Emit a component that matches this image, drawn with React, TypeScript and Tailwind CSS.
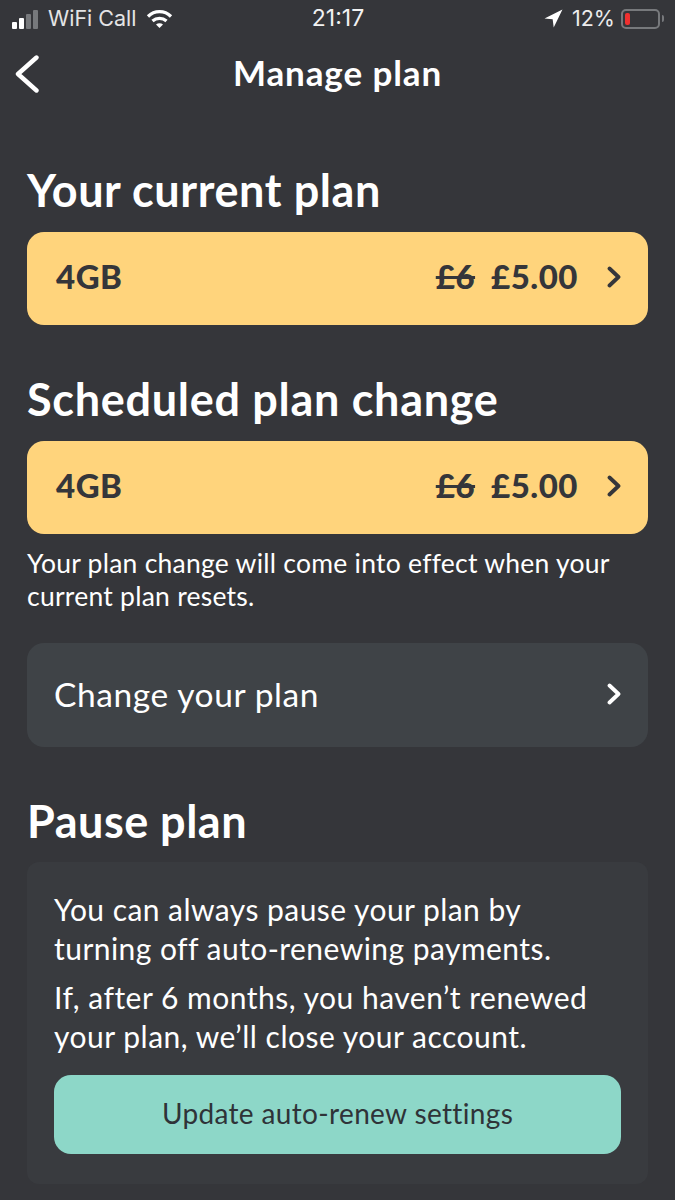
import React from 'react';

const font = { fontFamily: 'Lato, "Noto Sans", sans-serif' };

const Chevron = ({ className }: { className: string }) => (
  <svg viewBox="0 0 14 22" className={className} fill="none" stroke="currentColor" strokeWidth="3.8" strokeLinecap="round" strokeLinejoin="round">
    <path d="M2.5 2.5 L11.5 11 L2.5 19.5" />
  </svg>
);

const StatusBar = () => (
  <div className="h-[37px] flex items-center justify-between pl-[12px] pr-[11px] text-[#f2f2f2] font-['Inter',sans-serif]">
    <div className="w-[200px] flex items-center">
      <div className="flex items-end gap-[2px] h-[20px]">
        <span className="w-[5px] h-[7px] bg-white rounded-[1px]" />
        <span className="w-[5px] h-[11px] bg-white rounded-[1px]" />
        <span className="w-[5px] h-[15px] bg-[#77797c] rounded-[1px]" />
        <span className="w-[5px] h-[19px] bg-[#77797c] rounded-[1px]" />
      </div>
      <span className="ml-[10px] text-[21.5px] text-[#e4e4e5] leading-none">WiFi Call</span>
      <svg viewBox="0 0 26 20" className="ml-[9px] w-[27px] h-[20px]" fill="none" stroke="#fff" strokeWidth="3.2">
        <path d="M1.5 7.5 C8 1 18 1 24.5 7.5" />
        <path d="M6 12 C10 8.4 16 8.4 20 12" />
        <path d="M13 19 L9.5 15.6 C11.5 13.8 14.5 13.8 16.5 15.6 Z" fill="#fff" stroke="none" />
      </svg>
    </div>
    <span className="text-[23px] leading-none">21:17</span>
    <div className="w-[200px] flex items-center justify-end">
      <svg viewBox="0 0 18 18" className="w-[19px] h-[19px]" fill="#fff">
        <path d="M17.5 0.5 L0.5 9 L8.2 9.8 L9.2 17.5 Z" />
      </svg>
      <span className="ml-[9px] text-[21.5px] leading-none text-[#ececec]">12%</span>
      <div className="ml-[6px] w-[39px] h-[20px] rounded-[5px] border-2 border-[#77797c] p-[2px]">
        <div className="w-[5px] h-full rounded-[2px] bg-[#f0302f]" />
      </div>
      <span className="ml-[2px] w-[2px] h-[7px] bg-[#77797c] rounded-r-sm" />
    </div>
  </div>
);

const PlanCard = () => (
  <div className="h-[93px] rounded-[17px] bg-[#ffd47c] text-[#35363a] flex items-center pl-[29px] pr-[27px] pb-[4px] font-black text-[33px] tracking-[0.5px]">
    <span>4GB</span>
    <span className="ml-auto line-through">£6</span>
    <span className="ml-[16px]">£5.00</span>
    <Chevron className="ml-[29px] w-[14px] h-[22px]" />
  </div>
);

export default function App() {
  return (
    <div style={font} className="w-[675px] h-[1200px] overflow-hidden bg-[#35363a] text-white">
      <StatusBar />

      <header className="relative h-[75px] pb-[4px] flex items-center justify-center">
        <button className="absolute left-[15px] top-[18px]">
          <svg viewBox="0 0 24 38" className="w-[24px] h-[38px]" fill="none" stroke="#fff" strokeWidth="4.4" strokeLinecap="round" strokeLinejoin="round">
            <path d="M21.5 2.5 L3 19 L21.5 35.5" />
          </svg>
        </button>
        <h1 className="text-[35px] font-bold leading-none tracking-[0.9px]">Manage plan</h1>
      </header>

      <main className="px-[27px]">
        <h2 className="mt-[51px] mb-[15px] text-[45px] font-bold leading-[54px] tracking-[0.6px]">Your current plan</h2>
        <PlanCard />

        <h2 className="mt-[47px] mb-[15px] text-[45px] font-bold leading-[54px] tracking-[0.7px]">Scheduled plan change</h2>
        <PlanCard />

        <p className="mt-[13px] text-[26.5px] leading-[33px] tracking-[0.25px]">
          Your plan change will come into effect when your current plan resets.
        </p>

        <div className="mt-[30px] h-[104px] rounded-[17px] bg-[#3f4347] flex items-center justify-between pl-[27px] pr-[27px] pb-[2px] text-[33.5px] tracking-[0.6px]">
          <span>Change your plan</span>
          <Chevron className="w-[14px] h-[22px]" />
        </div>

        <h2 className="mt-[47px] mb-[14px] text-[45px] font-bold leading-[54px] tracking-[0.5px]">Pause plan</h2>

        <section className="h-[322px] rounded-[12px] bg-[#393b3f] px-[27px] pt-[28px]">
          <p className="text-[30px] leading-[39px] tracking-[0.45px]">
            You can always pause your plan by
            <br />
            turning off auto-renewing payments.
          </p>
          <p className="mt-[10px] text-[30px] leading-[39px] tracking-[0.5px]">
            If, after 6 months, you haven’t renewed your plan, we’ll close your account.
          </p>
          <button className="mt-[19px] w-full h-[79px] pb-[3px] rounded-[17px] bg-[#8dd7c8] text-[#2f3338] text-[28px] tracking-[0.35px]">
            Update auto-renew settings
          </button>
        </section>
      </main>
    </div>
  );
}
